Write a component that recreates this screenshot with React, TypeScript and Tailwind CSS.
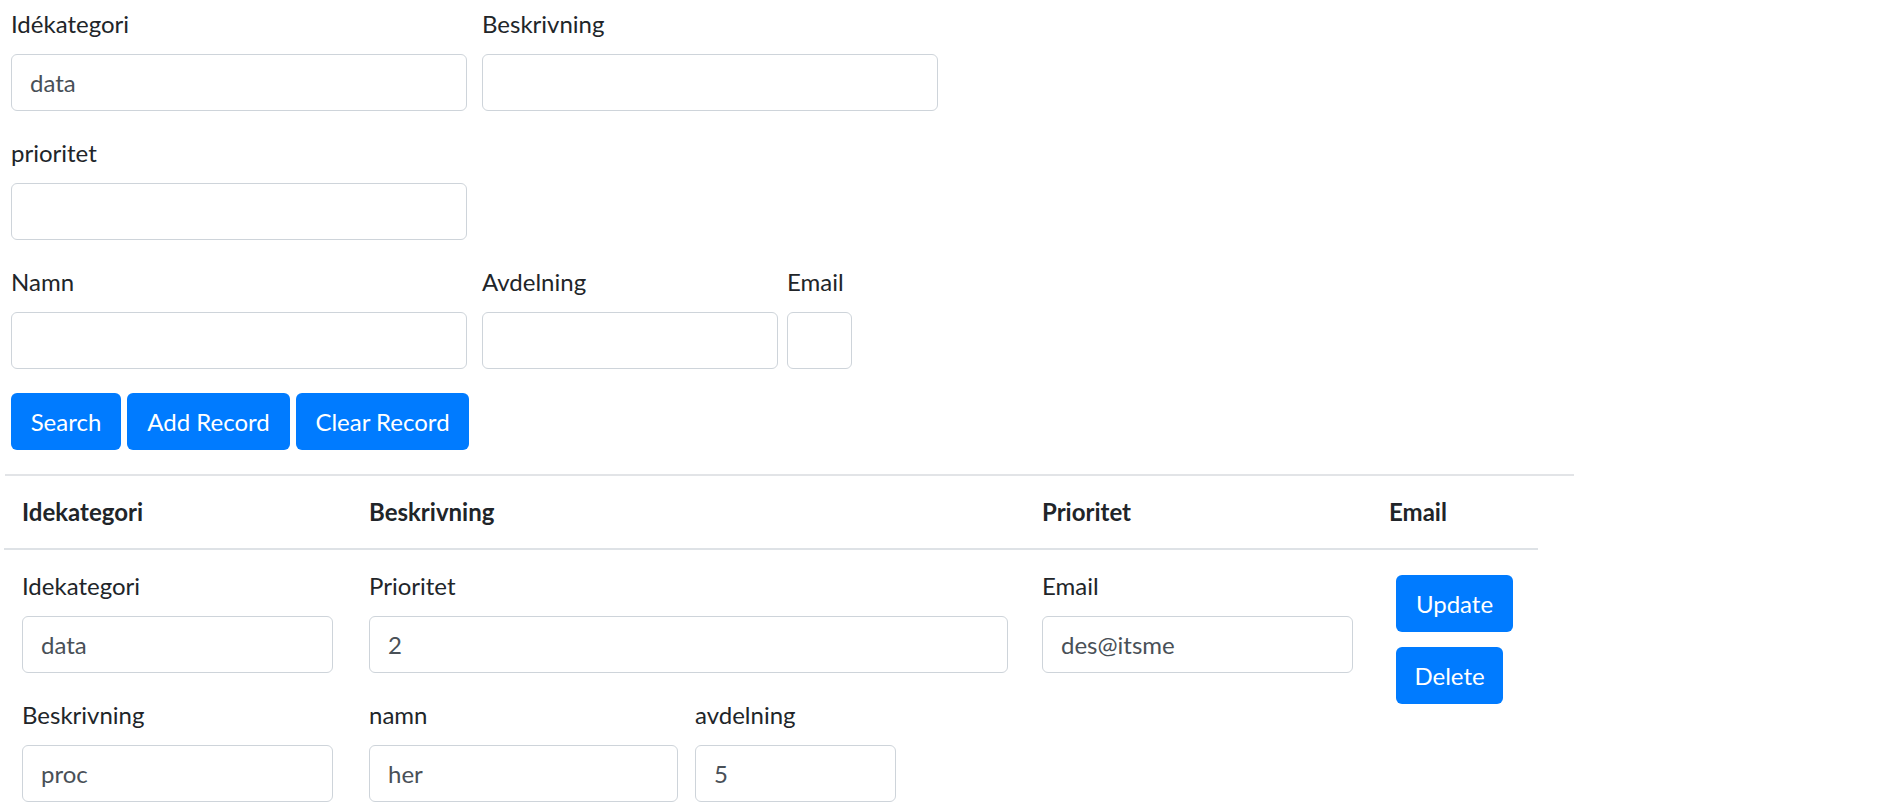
import React from "react";

const font = { fontFamily: "'Segoe UI', Lato, 'Noto Sans', sans-serif" };

function Field({ label, width, value = "" }: { label: string; width: number; value?: string }) {
  return (
    <div className="flex flex-col">
      <label className="block text-[24px] leading-[36px] mb-[12px] text-[#212529]">{label}</label>
      <input
        readOnly
        value={value}
        style={{ width }}
        className="h-[57px] border border-[#ced4da] rounded-[6px] px-[18px] text-[24px] text-[#495057] bg-white outline-none"
      />
    </div>
  );
}

function Btn({ children, w }: { children: React.ReactNode; w: string }) {
  return (
    <button className={`${w} h-[57px] rounded-[6px] bg-[#007bff] text-white text-[24px] leading-[36px] text-center`}>
      {children}
    </button>
  );
}

export default function App() {
  return (
    <div className="min-h-screen bg-white pl-[4px] pt-[6px]" style={font}>
      {/* search form */}
      <div className="ml-[7px] flex flex-col">
        <div className="flex gap-[15px] mb-[24px]">
          <Field label="Idékategori" width={456} value="data" />
          <Field label="Beskrivning" width={456} />
        </div>
        <div className="flex mb-[24px]">
          <Field label="prioritet" width={456} />
        </div>
        <div className="flex mb-[24px]">
          <Field label="Namn" width={456} />
          <div className="ml-[15px]">
            <Field label="Avdelning" width={296} />
          </div>
          <div className="ml-[9px]">
            <Field label="Email" width={65} />
          </div>
        </div>
        <div className="flex gap-[6px]">
          <Btn w="w-[110px]">Search</Btn>
          <Btn w="w-[163px]">Add Record</Btn>
          <Btn w="w-[173px]">Clear Record</Btn>
        </div>
      </div>

      <div className="mt-[24px] ml-[1px] w-[1569px] h-[2px] bg-[#e2e4e7]" />

      <table className="w-[1534px] border-collapse table-fixed text-[#212529]">
        <colgroup>
          <col className="w-[347px]" />
          <col className="w-[673px]" />
          <col className="w-[347px]" />
          <col className="w-[167px]" />
        </colgroup>
        <thead>
          <tr className="border-b-2 border-[#dee2e6]">
            {["Idekategori", "Beskrivning", "Prioritet", "Email"].map((h) => (
              <th key={h} className="p-[18px] text-left text-[24px] leading-[36px] font-bold">
                {h}
              </th>
            ))}
          </tr>
        </thead>
        <tbody>
          <tr>
            <td className="p-[18px] align-top">
              <div className="flex flex-col gap-[24px]">
                <Field label="Idekategori" width={311} value="data" />
                <Field label="Beskrivning" width={311} value="proc" />
              </div>
            </td>
            <td className="p-[18px] align-top">
              <div className="flex flex-col gap-[24px]">
                <Field label="Prioritet" width={639} value="2" />
                <div className="flex gap-[17px]">
                  <Field label="namn" width={309} value="her" />
                  <Field label="avdelning" width={201} value="5" />
                </div>
              </div>
            </td>
            <td className="p-[18px] align-top">
              <Field label="Email" width={311} value="des@itsme" />
            </td>
            <td className="p-[18px] align-top">
              <div className="flex flex-col items-start gap-[15px] mt-[7px] ml-[7px]">
                <Btn w="w-[117px]">Update</Btn>
                <Btn w="w-[107px]">Delete</Btn>
              </div>
            </td>
          </tr>
        </tbody>
      </table>
    </div>
  );
}
